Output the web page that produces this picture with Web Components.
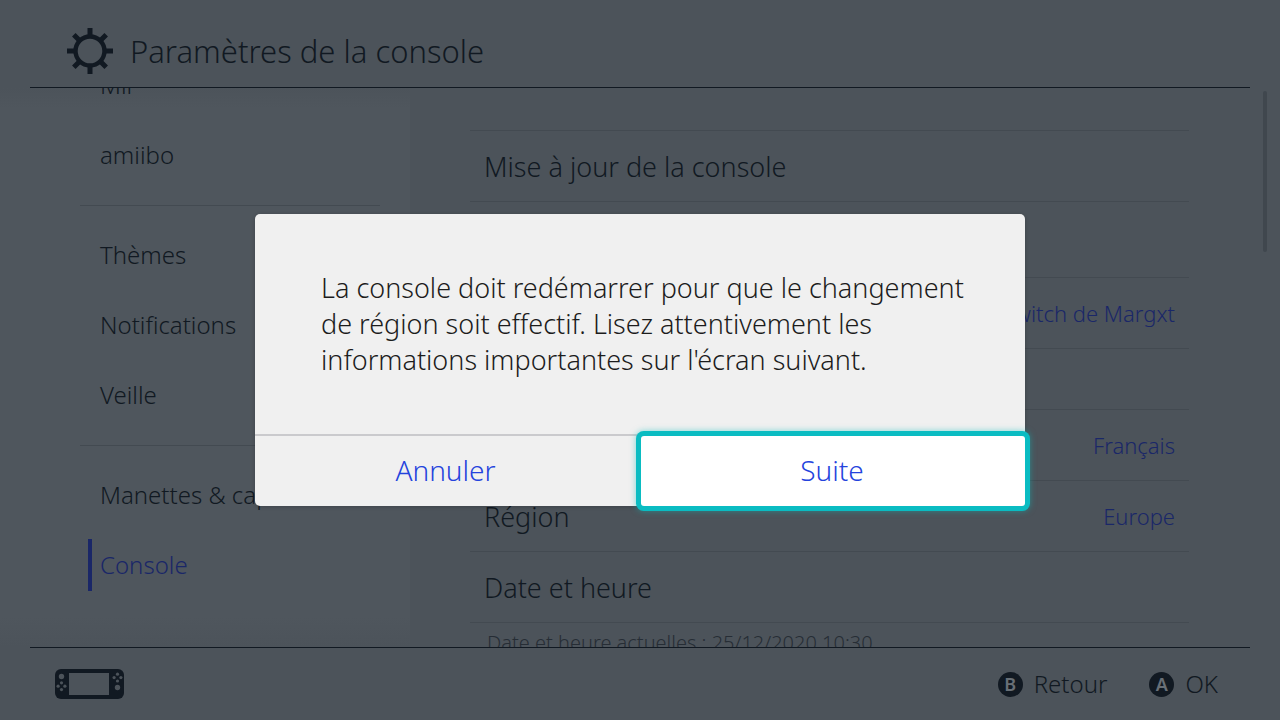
<!DOCTYPE html>
<html lang="fr">
<head>
<meta charset="utf-8">
<title>Paramètres de la console</title>
<style>
  html, body { margin: 0; height: 100%; }
  body {
    --bg: #4c535a;
    --panel: #4f565d;
    --ink: #111922;
    --rule: #434a51;
    --accent: #1a2768;
    --muted: #262d35;
    background: var(--bg);
    color: var(--ink);
    font-family: "Noto Sans", "Open Sans", sans-serif;
    font-weight: 300;
  }
</style>
</head>
<body>
<settings-app></settings-app>

<script>
const define = (name, html, setup) => {
  const tpl = document.createElement('template');
  tpl.innerHTML = html;
  customElements.define(name, class extends HTMLElement {
    constructor() {
      super();
      this.attachShadow({ mode: 'open' }).append(tpl.content.cloneNode(true));
      if (setup) setup(this.shadowRoot, this);
    }
  });
};

define('gear-icon', `
  <style>:host { display: block; width: 46px; height: 46px; } svg { display: block; }</style>
  <svg width="46" height="46" viewBox="0 0 46 46" fill="none" stroke="currentColor" aria-hidden="true">
    <circle cx="23" cy="23" r="14.5" stroke-width="4.4"/>
    <path stroke-width="5" d="M23 0v8M23 38v8M0 23h8M38 23h8M6.8 6.8l5.5 5.5M33.7 33.7l5.5 5.5M6.8 39.2l5.5-5.5M33.7 12.3l5.5-5.5"/>
  </svg>`);

define('handheld-icon', `
  <style>:host { display: block; width: 69px; height: 30px; } svg { display: block; }</style>
  <svg width="69" height="30" viewBox="0 0 69 30" role="img" aria-label="Mode portable">
    <rect width="69" height="30" rx="6" fill="currentColor"/>
    <g fill="var(--bg)">
      <rect x="14" y="4" width="40" height="22"/>
      <circle cx="6.5" cy="7.5" r="2.7"/>
      <circle cx="6.5" cy="13.8" r="1.6"/><circle cx="6.5" cy="20.6" r="1.6"/>
      <circle cx="3.1" cy="17.2" r="1.6"/><circle cx="9.9" cy="17.2" r="1.6"/>
      <circle cx="62.5" cy="5.2" r="1.6"/><circle cx="62.5" cy="12" r="1.6"/>
      <circle cx="59.1" cy="8.6" r="1.6"/><circle cx="65.9" cy="8.6" r="1.6"/>
      <circle cx="62.5" cy="18.5" r="2.7"/>
    </g>
  </svg>`);

define('page-header', `
  <style>
    :host { display: flex; align-items: center; gap: 17px; height: 73px; padding: 14px 37px 0; margin: 0 30px;
            border-bottom: 1px solid var(--ink); }
    h1 { margin: 0; font-size: 31px; font-weight: inherit; line-height: 40px; }
  </style>
  <gear-icon></gear-icon>
  <h1><slot></slot></h1>`);

define('side-menu', `
  <style>
    :host { display: block; width: 410px; flex: none; overflow: hidden;
            background: linear-gradient(var(--bg), var(--panel) 20px, var(--panel) calc(100% - 30px), var(--bg)); }
    nav { margin-top: -38px; padding: 0 30px 0 80px; }
  </style>
  <nav aria-label="Rubriques"><slot></slot></nav>`);

define('menu-item', `
  <style>
    :host { display: block; }
    a { display: flex; align-items: center; box-sizing: border-box; height: 70px; padding: 0 0 2px 20px; color: var(--ink);
        font-size: 24px; text-decoration: none; white-space: nowrap; }
    :host([current]) a { height: 52px; margin: 9px 0 9px 8px; padding-left: 8px;
        border-left: 4px solid var(--accent); color: var(--accent); }
  </style>
  <a href="#"><slot></slot></a>`,
  (root, host) => { if (host.hasAttribute('current')) root.querySelector('a').setAttribute('aria-current', 'page'); });

define('menu-rule', `
  <style>:host { display: block; padding: 15px 0 14px; } hr { margin: 0; border: 0; border-top: 1px solid var(--rule); }</style>
  <hr>`);

define('settings-group', `
  <style>
    :host { display: block; border-top: 1px solid var(--rule); }
    :host(.loose) { margin-bottom: 75px; }
    :host(.tight) { margin-bottom: 60px; }
  </style>
  <slot></slot>`);

define('settings-row', `
  <style>
    :host { display: block; border-bottom: 1px solid var(--rule); }
    button { display: flex; align-items: center; justify-content: space-between; width: 100%; height: 70px;
      padding: 0 14px; border: 0; background: none; color: inherit; font: inherit; font-size: 27px; text-align: left; }
    .value { margin-left: auto; color: var(--accent); font-size: 22px; }
  </style>
  <button type="button"><span><slot></slot></span><span class="value"><slot name="value"></slot></span></button>`);

define('settings-note', `
  <style>:host { display: block; padding: 8px 17px; color: var(--muted); font-size: 20px; line-height: 24px; }</style>
  <slot></slot>`);

define('settings-panel', `
  <style>
    :host { display: flex; flex: 1; min-width: 0; overflow: hidden; }
    .list { flex: 1; min-width: 0; padding: 42px 74px 0 60px; }
    .thumb { width: 4px; height: 161px; margin: 3px 13px 0 0; border-radius: 2px; background: #40474e; }
  </style>
  <div class="list"><slot></slot></div>
  <div class="thumb"></div>`);

define('button-hint', `
  <style>
    :host { display: flex; align-items: center; gap: 11px; font-size: 24px; line-height: 32px; }
    .key { display: grid; place-items: center; width: 25px; height: 25px; border-radius: 50%;
      background: var(--ink); color: #686f76; font-size: 18px; font-weight: 600; line-height: 25px; }
  </style>
  <span class="key"><slot name="key"></slot></span><span><slot></slot></span>`);

define('page-footer', `
  <style>
    :host { display: flex; align-items: center; justify-content: space-between; height: 72px;
      margin: 0 30px; padding: 0 32px 0 25px; border-top: 1px solid var(--ink); }
    .hints { display: flex; gap: 42px; }
  </style>
  <handheld-icon></handheld-icon>
  <div class="hints"><slot></slot></div>`);

define('confirm-dialog', `
  <style>
    :host { position: absolute; inset: 0; display: grid; place-items: center; }
    dialog { position: static; box-sizing: border-box; width: 770px; max-width: 90%; margin: 0; padding: 0; border: 0;
      border-radius: 5px; background: #f0f0f0; color: #1c1c1c; box-shadow: 0 1px 4px #0003; }
    p { margin: 0; padding: 56px 56px 56px 66px; font-size: 27px; line-height: 36px; }
    .actions { display: grid; grid-template-columns: 1fr 1fr; border-top: 2px solid #cacacd; }
  </style>
  <dialog open aria-labelledby="msg">
    <p id="msg"><slot></slot></p>
    <div class="actions"><slot name="action"></slot></div>
  </dialog>`);

define('dialog-action', `
  <style>
    :host { display: block; }
    button { display: block; width: 100%; height: 70px; padding: 0 4px 2px 0; border: 0; border-radius: 3px; background: none;
      color: #2443dd; font: inherit; font-size: 28px; outline: none; }
    :host([focused]) button { padding: 0 2px 2px 0; position: relative; background: #fff;
      box-shadow: 0 0 0 5px #0abcc2, 0 0 6px 5px #0abfc080; }
    :host([focused]) { margin-left: 1px; }
  </style>
  <button type="button"><slot></slot></button>`);

define('settings-app', `
  <style>
    :host { position: relative; display: flex; flex-direction: column; min-height: 100vh; overflow: hidden; }
    main { display: flex; flex: 1 1 0; min-height: 0; overflow: hidden; }
  </style>
  <page-header>Paramètres de la console</page-header>
  <main>
    <side-menu>
      <menu-item>Mii</menu-item>
      <menu-item>amiibo</menu-item>
      <menu-rule></menu-rule>
      <menu-item>Thèmes</menu-item>
      <menu-item>Notifications</menu-item>
      <menu-item>Veille</menu-item>
      <menu-rule></menu-rule>
      <menu-item>Manettes &amp; capteurs</menu-item>
      <menu-item current>Console</menu-item>
    </side-menu>
    <settings-panel>
      <settings-group class="loose">
        <settings-row>Mise à jour de la console</settings-row>
      </settings-group>
      <settings-group class="tight">
        <settings-row><span slot="value">Switch de Margxt</span></settings-row>
      </settings-group>
      <settings-group>
        <settings-row><span slot="value">Français</span></settings-row>
        <settings-row>Région<span slot="value">Europe</span></settings-row>
        <settings-row>Date et heure</settings-row>
        <settings-note>Date et heure actuelles : 25/12/2020 10:30</settings-note>
      </settings-group>
    </settings-panel>
  </main>
  <page-footer>
    <button-hint><span slot="key">B</span>Retour</button-hint>
    <button-hint><span slot="key">A</span>OK</button-hint>
  </page-footer>
  <confirm-dialog>
    La console doit redémarrer pour que le changement de région soit effectif. Lisez attentivement les informations importantes sur l'écran suivant.
    <dialog-action slot="action">Annuler</dialog-action>
    <dialog-action slot="action" focused>Suite</dialog-action>
  </confirm-dialog>`);
</script>
</body>
</html>
